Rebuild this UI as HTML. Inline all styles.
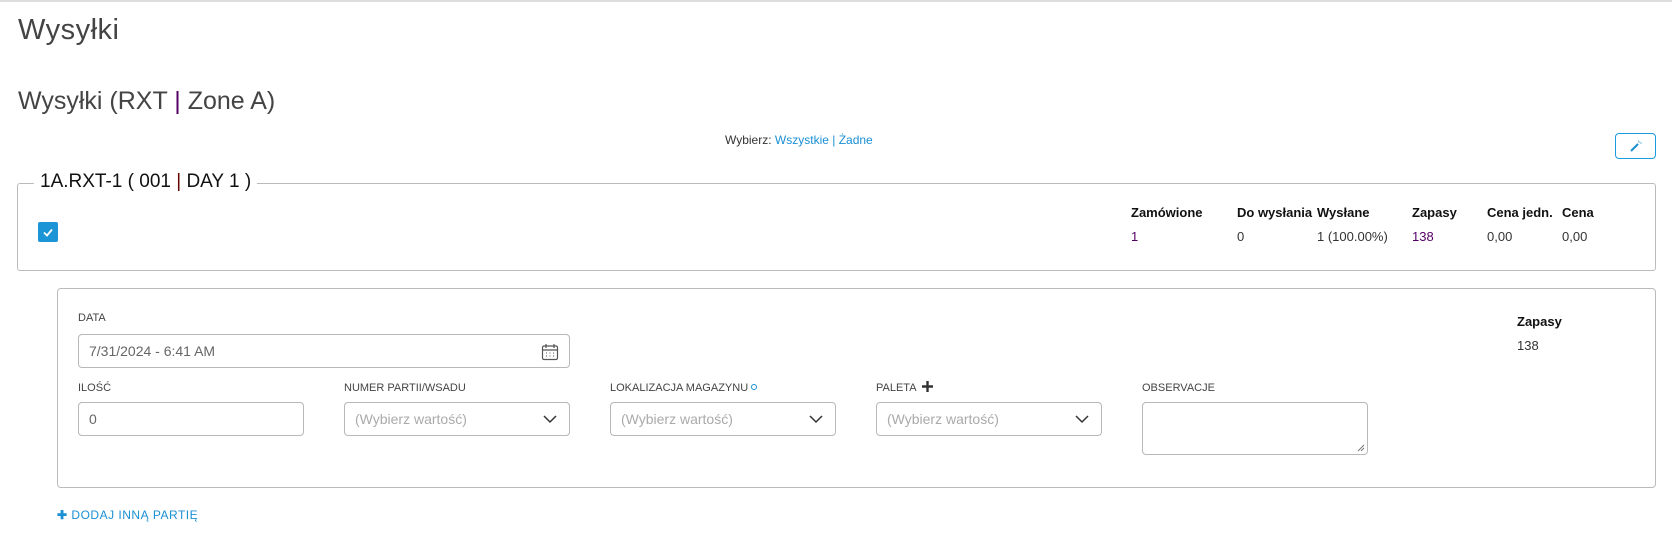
<!DOCTYPE html>
<html><head><meta charset="utf-8"><style>
*{box-sizing:border-box;margin:0;padding:0}
body{width:1672px;height:545px;background:#fff;font-family:"Liberation Sans",sans-serif;color:#222;position:relative;overflow:hidden;border-top:2px solid #ddd}
.a{position:absolute;white-space:nowrap}
.box{position:absolute;border:1px solid #bbb;border-radius:4px;background:#fff}
.lbl{position:absolute;font-size:11px;color:#444;white-space:nowrap;line-height:14px;height:14px}
.inp{position:absolute;border:1px solid #b8b8bc;border-radius:4px;height:34px;font-size:14px;color:#666;padding:0 10px;line-height:32px;white-space:nowrap}
.ph{color:#aaa}
.chev{position:absolute;right:12px;top:11px}
.h{font-size:13px;font-weight:bold;color:#111}
.v{font-size:13px;color:#333}
</style></head><body>
<div class="a" style="left:18px;top:12px;font-size:29px;color:#444;letter-spacing:0.5px">Wysyłki</div>
<div class="a" style="left:18px;top:85px;font-size:25px;color:#444">Wysyłki (RXT <span style="color:#506">|</span> Zone A)</div>
<div class="a" style="left:725px;top:131px;font-size:12px;color:#333">Wybierz: <span style="color:#1a8fd3">Wszystkie | Żadne</span></div>
<div class="box" style="left:1615px;top:131px;width:41px;height:26px;border:1px solid #1a9be0">
<svg class="a" style="left:13px;top:5px" width="14" height="14" viewBox="0 0 14 14"><path d="M2 12 L9 5" stroke="#1a8fd3" stroke-width="2"/><path d="M10 2v2M11 4h2M9 1.5l1 1" stroke="#7bc" stroke-width="1"/></svg></div>

<div class="box" style="left:17px;top:181px;width:1639px;height:88px;border-radius:3px"></div>
<div class="a" style="left:34px;top:169px;background:#fff;padding:0 6px;font-size:19px;color:#111">1A.RXT-1 ( 001 <span style="color:#600">|</span> DAY 1 )</div>
<div class="a" style="left:38px;top:220px;width:20px;height:20px;background:#1b95d6;border-radius:2px">
<svg width="20" height="20"><path d="M6 10.5l3 3 5-6" stroke="#fff" stroke-width="1.8" fill="none"/></svg></div>
<div class="a h" style="left:1131px;top:203px">Zamówione</div>
<div class="a h" style="left:1237px;top:203px">Do wysłania</div>
<div class="a h" style="left:1317px;top:203px">Wysłane</div>
<div class="a h" style="left:1412px;top:203px">Zapasy</div>
<div class="a h" style="left:1487px;top:203px">Cena jedn.</div>
<div class="a h" style="left:1562px;top:203px">Cena</div>
<div class="a v" style="left:1131px;top:227px;color:#506">1</div>
<div class="a v" style="left:1237px;top:227px">0</div>
<div class="a v" style="left:1317px;top:227px">1 (100.00%)</div>
<div class="a v" style="left:1412px;top:227px;color:#506">138</div>
<div class="a v" style="left:1487px;top:227px">0,00</div>
<div class="a v" style="left:1562px;top:227px">0,00</div>

<div class="box" style="left:57px;top:286px;width:1599px;height:200px"></div>
<div class="lbl" style="left:78px;top:309px">DATA</div>
<div class="inp" style="left:78px;top:332px;width:492px">7/31/2024 - 6:41 AM
<svg class="a" style="right:10px;top:8px" width="18" height="18" viewBox="0 0 18 18"><rect x="1.5" y="3" width="15" height="13.5" rx="1.5" fill="none" stroke="#555" stroke-width="1.2"/><path d="M1.5 7h15M5 1v4M13 1v4" stroke="#555" stroke-width="1.2"/><path d="M5 10h1M8.5 10h1M12 10h1M5 13h1M8.5 13h1M12 13h1" stroke="#555"/></svg></div>
<div class="a h" style="left:1517px;top:312px">Zapasy</div>
<div class="a v" style="left:1517px;top:336px">138</div>

<div class="lbl" style="left:78px;top:379px">ILOŚĆ</div>
<div class="lbl" style="left:344px;top:379px">NUMER PARTII/WSADU</div>
<div class="lbl" style="left:610px;top:379px">LOKALIZACJA MAGAZYNU <span style="display:inline-block;width:6px;height:6px;border:1.5px solid #1a8fd3;border-radius:50%;vertical-align:1px"></span></div>
<div class="lbl" style="left:876px;top:379px">PALETA <svg width="11" height="11" style="vertical-align:-1px;margin-left:3px"><path d="M5.5 0v11M0 5.5h11" stroke="#333" stroke-width="2.4"/></svg></div>
<div class="lbl" style="left:1142px;top:379px">OBSERVACJE</div>
<div class="inp" style="left:78px;top:400px;width:226px">0</div>
<div class="inp ph" style="left:344px;top:400px;width:226px">(Wybierz wartość)<svg class="chev" width="14" height="10"><path d="M1 2l6 6 6-6" stroke="#333" stroke-width="1.5" fill="none"/></svg></div>
<div class="inp ph" style="left:610px;top:400px;width:226px">(Wybierz wartość)<svg class="chev" width="14" height="10"><path d="M1 2l6 6 6-6" stroke="#333" stroke-width="1.5" fill="none"/></svg></div>
<div class="inp ph" style="left:876px;top:400px;width:226px">(Wybierz wartość)<svg class="chev" width="14" height="10"><path d="M1 2l6 6 6-6" stroke="#333" stroke-width="1.5" fill="none"/></svg></div>
<div class="inp" style="left:1142px;top:400px;width:226px;height:53px"><svg class="a" style="right:2px;bottom:2px" width="8" height="8"><path d="M7 1L1 7M7 4L4 7" stroke="#777"/></svg></div>

<div class="a" style="left:57px;top:506px;font-size:12px;color:#1a8fd3;letter-spacing:0.5px"><b>✚</b> DODAJ INNĄ PARTIĘ</div>
</body></html>
